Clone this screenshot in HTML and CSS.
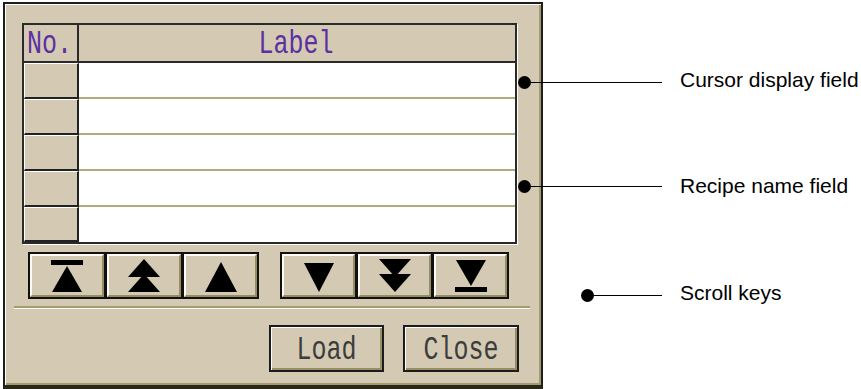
FILE: index.html
```html
<!DOCTYPE html>
<html>
<head>
<meta charset="utf-8">
<link rel="stylesheet" href="styles.css">
</head>
<body>
<div class="stage">
  <div class="panel">
    <div class="table">
      <div class="hcell no"><span class="mono">No.</span></div>
      <div class="hcell label"><span class="mono">Label</span></div>
      <div class="ncell"></div><div class="lcell"></div>
      <div class="ncell"></div><div class="lcell"></div>
      <div class="ncell"></div><div class="lcell"></div>
      <div class="ncell"></div><div class="lcell"></div>
      <div class="ncell"></div><div class="lcell last"></div>
    </div>
    <div class="scroll-row">
      <div class="group">
        <div class="key w74"><svg width="34" height="34" viewBox="0 0 34 34"><rect x="1" y="1" width="32" height="5"/><polygon points="17,7 2,33 32,33"/></svg></div>
        <div class="key w74"><svg width="34" height="34" viewBox="0 0 34 34"><polygon points="17,0 1,18 33,18"/><polygon points="17,15 1,33 33,33"/></svg></div>
        <div class="key w73"><svg width="34" height="34" viewBox="0 0 34 34"><polygon points="17,3 1,33 33,33"/></svg></div>
      </div>
      <div class="group">
        <div class="key w73"><svg width="34" height="34" viewBox="0 0 34 34"><polygon points="2,4 32,4 17,33"/></svg></div>
        <div class="key w73"><svg width="34" height="34" viewBox="0 0 34 34"><polygon points="1,0 33,0 17,18"/><polygon points="1,15 33,15 17,33"/></svg></div>
        <div class="key w73"><svg width="34" height="34" viewBox="0 0 34 34"><polygon points="2,1 32,1 17,27"/><rect x="1" y="28" width="32" height="5"/></svg></div>
      </div>
    </div>
    <div class="sep"></div>
    <div class="actions">
      <div class="btn load"><span class="mono">Load</span></div>
      <div class="btn close"><span class="mono">Close</span></div>
    </div>
  </div>

  <div class="callout c1"><span class="dot"></span><span class="line"></span></div>
  <div class="callout c2"><span class="dot"></span><span class="line"></span></div>
  <div class="callout c3"><span class="dot"></span><span class="line"></span></div>
  <div class="note n1">Cursor display field</div>
  <div class="note n2">Recipe name field</div>
  <div class="note n3">Scroll keys</div>
</div>
</body>
</html>
```
FILE: styles.css
```css
html, body {
  margin: 0;
  padding: 0;
  background: #ffffff;
}

.stage {
  position: relative;
  width: 861px;
  height: 389px;
  overflow: hidden;
}

.panel {
  box-sizing: border-box;
  margin: 2px 0 0 3px;
  width: 540px;
  height: 387px;
  background: #d4cab3;
  border-style: solid;
  border-width: 2px 2px 4px 2px;
  border-color: #1e1e1e #1e1e1e #2a2818 #1e1e1e;
  box-shadow: inset 1px 1px 0 #ffffff, inset -2px -2px 0 #a39a70;
  padding: 19px 0 0 17px;
  display: flex;
  flex-direction: column;
}

.mono {
  display: inline-block;
  font-family: "Liberation Mono", "DejaVu Sans Mono", monospace;
  font-size: 25px;
  line-height: 25px;
  transform: scaleY(1.32);
}

/* table */
.table {
  box-sizing: border-box;
  width: 495px;
  display: grid;
  grid-template-columns: 55px 1fr;
  grid-template-rows: 38px 36px 36px 36px 36px 35px;
  border: 2px solid #2a2a2a;
  box-shadow: 1px 1px 0 #ffffff;
  background: #ffffff;
}

.hcell {
  box-sizing: border-box;
  background: #d4cab3;
  border-bottom: 2px solid #2a2a2a;
  color: #5a30a2;
  display: flex;
  align-items: center;
  padding-top: 2px;
}

.hcell.no {
  border-right: 2px solid #2a2a2a;
  padding-left: 3px;
}

.hcell.label {
  justify-content: center;
  padding-right: 2px;
}

.ncell {
  box-sizing: border-box;
  background: #d4cab3;
  border-style: solid;
  border-width: 1px 2px 2px 1px;
  border-color: #ffffff #222222 #222222 #ffffff;
}

.lcell {
  box-sizing: border-box;
  background: #ffffff;
  border-bottom: 2px solid #b3a97f;
}

.lcell.last {
  border-bottom: none;
}

/* scroll keys */
.scroll-row {
  display: flex;
  gap: 21px;
  margin: 8px 0 0 6px;
}

.group {
  display: flex;
  gap: 3px;
  background: #111111;
  border: 2px solid #111111;
  height: 43px;
}

.key {
  box-sizing: border-box;
  height: 43px;
  background: #d4cab3;
  border-style: solid;
  border-width: 2px;
  border-color: #fbfaf4 #968d63 #968d63 #fbfaf4;
  display: flex;
  align-items: center;
  justify-content: center;
}

.key.w74 { width: 74px; }
.key.w73 { width: 73px; }

.key svg {
  display: block;
  fill: #000000;
}

/* separator */
.sep {
  width: 516px;
  height: 2px;
  margin: 7px 0 0 -8px;
  background: #a69c6c;
  border-bottom: 1px solid #ffffff;
}

/* action buttons */
.actions {
  display: flex;
  gap: 19px;
  margin: 16px 0 0 247px;
}

.btn {
  box-sizing: border-box;
  height: 47px;
  background: #d4cab3;
  border: 2px solid #1c1c1c;
  box-shadow: inset 1px 1px 0 #ffffff, inset -2px -2px 0 #978e64;
  color: #3c3c3c;
  display: flex;
  align-items: center;
  justify-content: center;
  padding-top: 3px;
}

.btn.load { width: 115px; }
.btn.close { width: 116px; }

/* callouts */
.callout {
  position: absolute;
  display: flex;
  align-items: center;
  height: 13px;
}

.dot {
  width: 13px;
  height: 13px;
  border-radius: 50%;
  background: #000000;
  flex: none;
}

.line {
  height: 1px;
  background: #000000;
  flex: 1;
}

.c1 { left: 518px; top: 76px; width: 144px; }
.c2 { left: 518px; top: 180px; width: 144px; }
.c3 { left: 581px; top: 289px; width: 81px; }

.note {
  position: absolute;
  left: 680px;
  font-family: "Liberation Sans", Arial, sans-serif;
  font-size: 21px;
  line-height: 21px;
  color: #000000;
  white-space: nowrap;
}

.n1 { top: 69px; }
.n2 { top: 175px; }
.n3 { top: 282px; }
```
